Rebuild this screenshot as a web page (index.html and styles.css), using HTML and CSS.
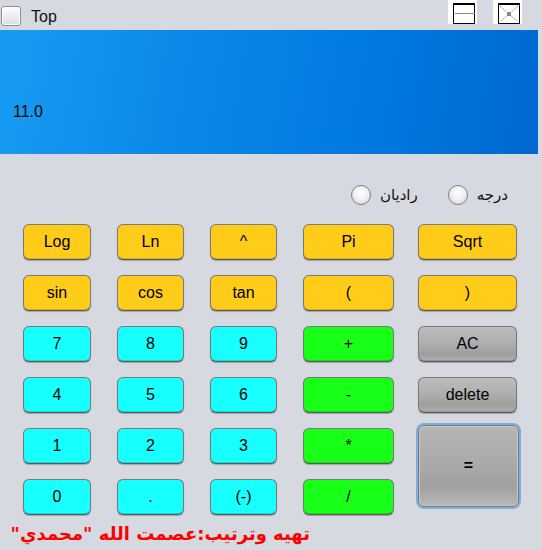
FILE: index.html
```html
<!DOCTYPE html>
<html lang="fa">
<head>
<meta charset="utf-8">
<title>Calculator</title>
<link rel="stylesheet" href="styles.css">
</head>
<body>
<div class="app">
  <div class="titlebar">
    <label class="top-check"><span class="checkbox"></span><span class="top-label">Top</span></label>
    <div class="win-btns">
      <span class="win-btn"><svg width="22" height="21" viewBox="0 0 22 21"><rect x="0.5" y="0.5" width="21" height="20" fill="#fff" stroke="#000"/><rect x="0" y="0" width="22" height="2" fill="#000"/><line x1="2" y1="10.5" x2="22" y2="10.5" stroke="#888" stroke-width="1"/></svg></span>
      <span class="win-btn"><svg width="22" height="21" viewBox="0 0 22 21"><rect x="0.5" y="0.5" width="21" height="20" fill="#fff" stroke="#000"/><rect x="0" y="0" width="22" height="2" fill="#000"/><path d="M2 3 L20 19 M20 3 L2 19" stroke="#999" stroke-width="1" stroke-dasharray="2 1"/><rect x="9" y="9" width="4" height="4" fill="#888"/></svg></span>
    </div>
  </div>
  <div class="display"><span class="result">11.0</span></div>
  <div class="mode-row">
    <label class="mode"><span class="radio"></span><span class="mode-label" dir="rtl">رادیان</span></label>
    <label class="mode"><span class="radio"></span><span class="mode-label" dir="rtl">درجه</span></label>
  </div>
  <div class="keys">
    <button class="key yellow">Log</button>
    <button class="key yellow">Ln</button>
    <button class="key yellow">^</button>
    <button class="key yellow">Pi</button>
    <button class="key yellow">Sqrt</button>

    <button class="key yellow">sin</button>
    <button class="key yellow">cos</button>
    <button class="key yellow">tan</button>
    <button class="key yellow">(</button>
    <button class="key yellow">)</button>

    <button class="key cyan">7</button>
    <button class="key cyan">8</button>
    <button class="key cyan">9</button>
    <button class="key green">+</button>
    <button class="key gray">AC</button>

    <button class="key cyan">4</button>
    <button class="key cyan">5</button>
    <button class="key cyan">6</button>
    <button class="key green">-</button>
    <button class="key gray">delete</button>

    <button class="key cyan">1</button>
    <button class="key cyan">2</button>
    <button class="key cyan">3</button>
    <button class="key green">*</button>
    <button class="key gray equals">=</button>

    <button class="key cyan">0</button>
    <button class="key cyan">.</button>
    <button class="key cyan">(-)</button>
    <button class="key green">/</button>
  </div>
  <div class="credit" dir="rtl">تهیه وترتیب:عصمت الله "محمدي"</div>
</div>
</body>
</html>
```
FILE: styles.css
```css
* { box-sizing: border-box; }
html, body { margin: 0; padding: 0; }
body {
  background: #d6d9e0;
  font-family: "Liberation Sans", Arial, sans-serif;
  width: 542px;
  height: 550px;
  overflow: hidden;
}
.app { display: flex; flex-direction: column; }

.titlebar {
  height: 30px;
  display: flex;
  align-items: flex-start;
  justify-content: space-between;
}
.top-check {
  display: flex;
  align-items: center;
  gap: 10px;
  padding: 6px 0 0 1px;
}
.checkbox {
  width: 20px;
  height: 20px;
  border: 1px solid #8a8d92;
  border-radius: 3px;
  background: linear-gradient(#fdfdfd, #dcdde0);
  box-shadow: inset 0 0 0 1px #fff;
}
.top-label { font-size: 16px; color: #111; position: relative; top: 1px; }
.win-btns {
  display: flex;
  gap: 16px;
  padding-right: 20px;
}
.win-btn {
  display: flex;
  width: 29px;
  height: 24px;
  background: #fff;
  justify-content: flex-end;
  align-items: flex-end;
  padding-right: 2px;
}
.win-btn svg { display: block; }

.display {
  height: 124px;
  width: 538px;
  background: linear-gradient(100deg, #189cf2 0%, #0a88ea 35%, #0078e0 70%, #0068d0 100%);
  display: flex;
  align-items: center;
  padding: 40px 0 0 13px;
}
.result { font-size: 16px; color: #0a0a0a; }

.mode-row {
  display: flex;
  justify-content: flex-end;
  gap: 30px;
  padding: 30px 34px 0 0;
  height: 70px;
}
.mode {
  display: flex;
  align-items: center;
  gap: 9px;
  height: 22px;
}
.radio {
  width: 20px;
  height: 20px;
  border-radius: 50%;
  border: 1px solid #7d8087;
  background: radial-gradient(circle at 50% 40%, #ffffff 0%, #f0f0f2 45%, #cfd1d6 100%);
}
.mode-label {
  font-family: "DejaVu Sans", sans-serif;
  font-size: 15px;
  color: #111;
}

.keys {
  display: grid;
  grid-template-columns: 68px 67px 67px 91px 97px;
  grid-auto-rows: 36px;
  column-gap: 26px;
  row-gap: 15px;
  padding-left: 23px;
}
.key {
  font-family: "Liberation Sans", Arial, sans-serif;
  font-size: 16px;
  color: #000;
  border: 1px solid #7a7a7a;
  border-bottom-color: #5a5a5a;
  border-radius: 6px;
  box-shadow: 0 1px 1px rgba(0,0,0,0.25), inset 0 -1px 0 rgba(0,0,0,0.15);
  padding: 0;
  margin: 0;
  cursor: pointer;
}
.keys .key:nth-child(5n) { margin-left: -2px; }
.yellow { background: #ffcc1a; }
.cyan { background: #18ffff; }
.green { background: #18ff18; }
.gray {
  background: linear-gradient(#bdbdbd 0%, #adadad 50%, #9e9e9e 80%, #b2b2b2 100%);
}
.equals {
  grid-row: span 2;
  height: 82px;
  margin-top: -3px;
  width: 101px;
  border: 1px solid #6f7a86;
  box-shadow: 0 0 0 2px #7eaedc, inset 0 0 0 1px #c8c8c8;
  background: linear-gradient(#b6b6b6 0%, #a8a8a8 55%, #a0a0a0 75%, #b8b8b8 100%);
  font-size: 16px;
  font-weight: bold;
}
.keys .equals { margin-left: -2px; }

.credit {
  font-family: "DejaVu Sans", sans-serif;
  font-weight: bold;
  font-size: 18px;
  color: #ff0000;
  width: 310px;
  text-align: right;
  margin-top: 8px;
  white-space: nowrap;
}
```
